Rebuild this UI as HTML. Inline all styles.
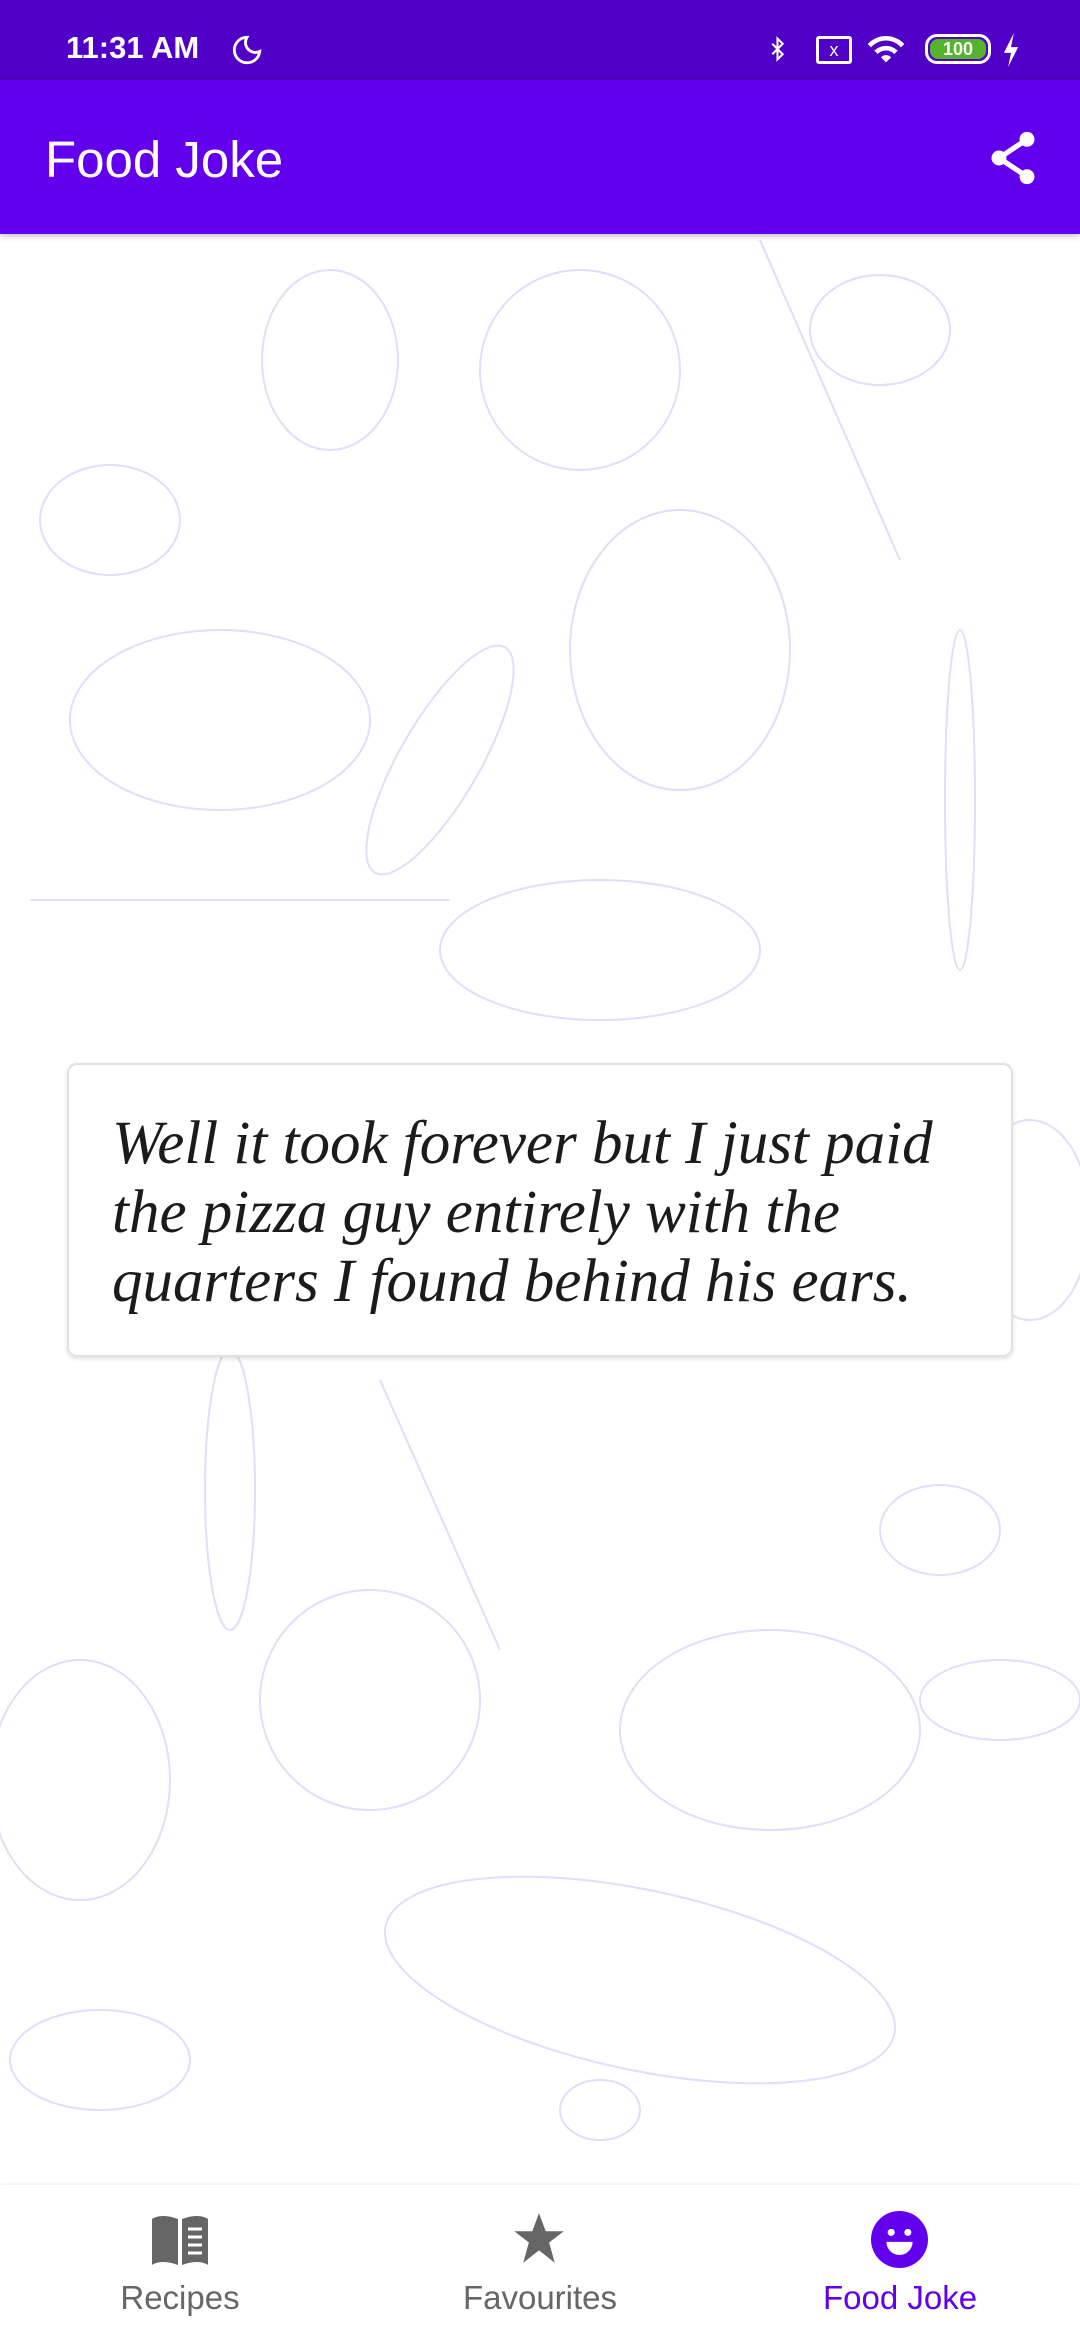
<!DOCTYPE html>
<html><head><meta charset="utf-8"><style>
*{margin:0;padding:0;box-sizing:border-box}
body{width:1080px;height:2340px;position:relative;overflow:hidden;background:#fff;font-family:"Liberation Sans",sans-serif}
.status{position:absolute;left:0;top:0;width:1080px;height:80px;background:#5100C7;color:#fff}
.appbar{position:absolute;left:0;top:80px;width:1080px;height:154px;background:#6200EE;box-shadow:0 2px 6px rgba(0,0,0,.25)}
.title{position:absolute;left:45px;top:54px;font-size:51px;color:#fff;line-height:1}
.card{position:absolute;left:67px;top:1063px;width:946px;height:294px;background:#fff;border:2px solid #e2e2e2;border-radius:10px;box-shadow:0 2px 4px rgba(0,0,0,.12)}
.joke{position:absolute;left:43px;top:44px;font-family:"Liberation Serif",serif;font-style:italic;font-size:61px;line-height:69px;color:#1b1b1b;white-space:nowrap;letter-spacing:0px}
.nav{position:absolute;left:0;top:2185px;width:1080px;height:155px;background:#fff;box-shadow:0 -1px 3px rgba(0,0,0,.08)}
.lbl{position:absolute;top:94px;font-size:33px;color:#666;width:360px;text-align:center}
</style></head><body>
<svg width="1080" height="2340" style="position:absolute;left:0;top:0" fill="none" stroke="#e4dcf8" stroke-width="2">
<ellipse cx="330" cy="360" rx="68" ry="90"/><circle cx="580" cy="370" r="100"/><ellipse cx="880" cy="330" rx="70" ry="55"/>
<ellipse cx="110" cy="520" rx="70" ry="55"/><ellipse cx="680" cy="650" rx="110" ry="140"/><ellipse cx="220" cy="720" rx="150" ry="90"/>
<ellipse cx="440" cy="760" rx="40" ry="130" transform="rotate(30 440 760)"/><line x1="760" y1="240" x2="900" y2="560"/>
<ellipse cx="960" cy="800" rx="15" ry="170"/><line x1="30" y1="900" x2="450" y2="900"/><ellipse cx="600" cy="950" rx="160" ry="70"/>
<circle cx="370" cy="1700" r="110"/><ellipse cx="770" cy="1730" rx="150" ry="100"/><ellipse cx="80" cy="1780" rx="90" ry="120"/>
<ellipse cx="640" cy="1980" rx="260" ry="90" transform="rotate(12 640 1980)"/><ellipse cx="940" cy="1530" rx="60" ry="45"/>
<ellipse cx="230" cy="1490" rx="25" ry="140"/><line x1="380" y1="1380" x2="500" y2="1650"/><ellipse cx="100" cy="2060" rx="90" ry="50"/>
<ellipse cx="1030" cy="1220" rx="60" ry="100"/><ellipse cx="1000" cy="1700" rx="80" ry="40"/><ellipse cx="600" cy="2110" rx="40" ry="30"/>
</svg>
<div class="status">
<div style="position:absolute;left:66px;top:30px;font-size:31px;font-weight:bold">11:31 AM</div>
<svg style="position:absolute;left:230px;top:33px" width="34" height="34" viewBox="0 0 24 24" fill="none" stroke="#fff" stroke-width="2"><path d="M12 3a9 9 0 1 0 9 10 7 7 0 0 1-9-10z"/></svg>
<svg style="position:absolute;left:765px;top:33px" width="25" height="32" viewBox="0 0 24 24" fill="none" stroke="#fff" stroke-width="2"><path d="M7 7l10 10-5 5V2l5 5L7 17"/></svg>
<div style="position:absolute;left:816px;top:36px;width:36px;height:28px;border:3px solid #fff;border-radius:3px;font-size:18px;text-align:center;line-height:22px">x</div>
<svg style="position:absolute;left:866px;top:32px" width="40" height="34" viewBox="0 0 24 20" fill="#fff"><path d="M12 18l-3-3a4 4 0 0 1 6 0z M5 11a10 10 0 0 1 14 0l-2 2a7 7 0 0 0-10 0z M1 7a15 15 0 0 1 22 0l-2 2a12 12 0 0 0-18 0z"/></svg>
<div style="position:absolute;left:925px;top:34px;width:66px;height:30px;border:3px solid #fff;border-radius:12px;padding:2px"><div style="width:100%;height:100%;background:#56b32c;border-radius:8px;font-size:18px;font-weight:bold;text-align:center;line-height:20px">100</div></div>
<svg style="position:absolute;left:1000px;top:33px" width="22" height="34" viewBox="0 0 12 24" fill="#fff"><path d="M8 0L1 14h5l-2 10 7-14H6z"/></svg>
</div>
<div class="appbar">
<div class="title">Food Joke</div>
<svg style="position:absolute;left:985px;top:48px" width="56" height="60" viewBox="0 0 24 24" fill="#fff"><circle cx="18" cy="4" r="3.2"/><circle cx="6" cy="12" r="3.2"/><circle cx="18" cy="20" r="3.2"/><path d="M6 12L18 4M6 12l12 8" stroke="#fff" stroke-width="2.2"/></svg>
</div>
<div class="card"><div class="joke">Well it took forever but I just paid<br>the pizza guy entirely with the<br>quarters I found behind his ears.</div></div>
<div class="nav">
<svg style="position:absolute;left:149px;top:28px" width="62" height="52" viewBox="0 0 30 26" fill="#666"><path d="M1 3c3-2 8-2 13 0v23c-5-2-10-2-13 0z M16 3c5-2 10-2 13 0v23c-3-2-8-2-13 0z"/><path d="M19 8h7M19 12h7M19 16h7M19 20h7" stroke="#fff" stroke-width="1.5"/></svg>
<svg style="position:absolute;left:511px;top:26px" width="56" height="54" viewBox="0 0 24 24" fill="#666"><path d="M12 1l3 8h8l-6.5 5 2.5 9-7-5.5L5 23l2.5-9L1 9h8z"/></svg>
<svg style="position:absolute;left:871px;top:26px" width="57" height="57" viewBox="0 0 24 24"><circle cx="12" cy="12" r="12" fill="#6200EE"/><circle cx="8.5" cy="9" r="1.5" fill="#fff"/><circle cx="15.5" cy="9" r="1.5" fill="#fff"/><path d="M6.5 13h11a5.5 5.5 0 0 1-11 0z" fill="#fff"/></svg>
<div class="lbl" style="left:0">Recipes</div>
<div class="lbl" style="left:360px">Favourites</div>
<div class="lbl" style="left:720px;color:#6200EE">Food Joke</div>
</div>
</body></html>
